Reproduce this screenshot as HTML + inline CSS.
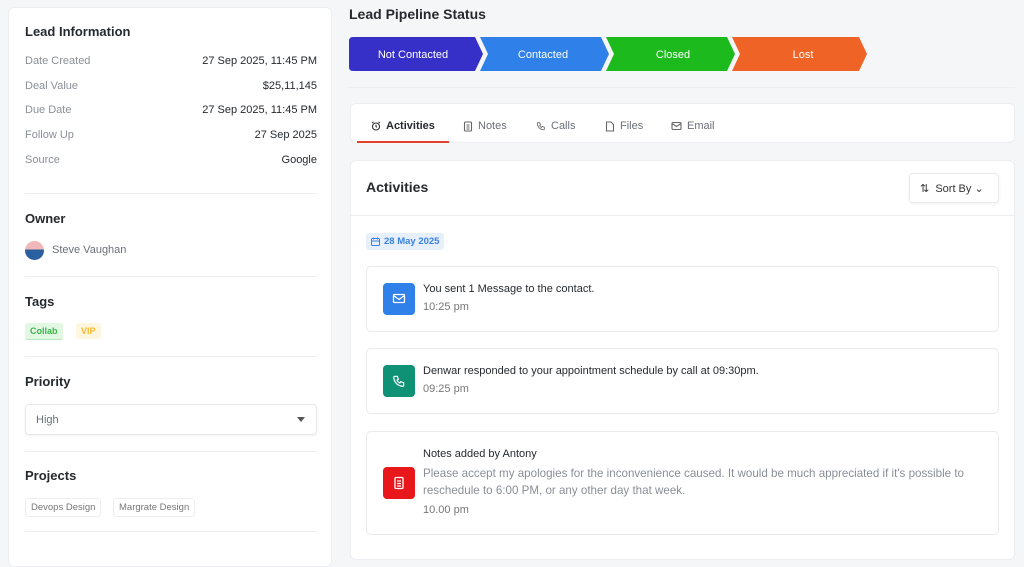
<!DOCTYPE html>
<html><head><meta charset="utf-8"><style>
*{box-sizing:border-box;margin:0;padding:0}
body{width:1024px;height:542px;overflow:hidden;background:#f5f6f8;font-family:"Liberation Sans",sans-serif;color:#222;position:relative}
.abs{position:absolute}
.left{left:8px;top:7px;width:324px;height:560px;background:#fff;border-radius:6px;border:1px solid #eceef1}
h3{font-size:13px;font-weight:700;color:#262a2e}
.row{position:absolute;left:16px;width:292px;font-size:11px;display:flex;justify-content:space-between}
.row span:first-child{color:#8a8f96}.row span:last-child{color:#262a2e}
.hr{position:absolute;left:16px;width:292px;height:1px;background:#eceef1}
.card{background:#fff;border:1px solid #eceef1;border-radius:6px}
.tab{position:absolute;top:120px;font-size:11px;color:#6b7078;display:flex;align-items:center;gap:5px}
.item{position:absolute;left:366px;width:633px;background:#fff;border:1px solid #e8eaed;border-radius:5px}
.ic{position:absolute;left:16px;width:32px;height:32px;border-radius:4px;display:flex;align-items:center;justify-content:center}
.t1{font-size:11px;color:#262a2e}.t2{font-size:11px;color:#777}
</style></head><body>
<div class="abs left">
<h3 class="abs" style="left:16px;top:16px">Lead Information</h3>
<div class="row" style="top:47px"><span>Date Created</span><span>27 Sep 2025, 11:45 PM</span></div>
<div class="row" style="top:72px"><span>Deal Value</span><span>$25,11,145</span></div>
<div class="row" style="top:96px"><span>Due Date</span><span>27 Sep 2025, 11:45 PM</span></div>
<div class="row" style="top:121px"><span>Follow Up</span><span>27 Sep 2025</span></div>
<div class="row" style="top:146px"><span>Source</span><span>Google</span></div>
<div class="hr" style="top:185px"></div>
<h3 class="abs" style="left:16px;top:203px">Owner</h3>
<div class="abs" style="left:16px;top:233px;width:19px;height:19px;border-radius:50%;background:linear-gradient(#f0b8b8 45%,#2a5fa0 45%)"></div>
<div class="abs" style="left:43px;top:236px;font-size:11px;color:#6b7078">Steve Vaughan</div>
<div class="hr" style="top:268px"></div>
<h3 class="abs" style="left:16px;top:286px">Tags</h3>
<div class="abs" style="left:16px;top:315px;padding:3px 5px;font-size:9px;font-weight:700;color:#3ab54a;background:#e2f8e3;border-radius:3px;border-bottom:1px solid #b5e6b9">Collab</div>
<div class="abs" style="left:67px;top:315px;padding:3px 5px;font-size:9px;font-weight:700;color:#f5b82e;background:#fff6e0;border-radius:3px">VIP</div>
<div class="hr" style="top:348px"></div>
<h3 class="abs" style="left:16px;top:366px">Priority</h3>
<div class="abs" style="left:16px;top:396px;width:292px;height:31px;border:1px solid #e5e7ea;border-radius:4px;box-shadow:0 1px 2px rgba(0,0,0,.05);font-size:11px;color:#6b7078;padding:9px 10px">High<span style="position:absolute;right:11px;top:12px;border:4px solid transparent;border-top:5px solid #555"></span></div>
<div class="hr" style="top:443px"></div>
<h3 class="abs" style="left:16px;top:460px">Projects</h3>
<div class="abs" style="left:16px;top:490px;padding:3px 5px;font-size:9.5px;color:#777;border:1px solid #eceef1;border-radius:3px">Devops Design</div>
<div class="abs" style="left:104px;top:490px;padding:3px 5px;font-size:9.5px;color:#777;border:1px solid #eceef1;border-radius:3px">Margrate Design</div>
<div class="hr" style="top:523px"></div>
</div>

<div class="abs" style="left:349px;top:6px;font-size:14px;font-weight:700;color:#262a2e">Lead Pipeline Status</div>
<svg class="abs" style="left:349px;top:37px" width="520" height="34">
<path d="M4 0H126L134 17L126 34H4Q0 34 0 30V4Q0 0 4 0Z" fill="#3730c8"/>
<path d="M131 0H252L260 17L252 34H131L139 17Z" fill="#2f80e8"/>
<path d="M257 0H378L386 17L378 34H257L265 17Z" fill="#1dba1d"/>
<path d="M383 0H510L518 17L510 34H383L391 17Z" fill="#ef6326"/>
<g font-family="Liberation Sans" font-size="11" fill="#fff" text-anchor="middle"><text x="64" y="21">Not Contacted</text><text x="194" y="21">Contacted</text><text x="324" y="21">Closed</text><text x="454" y="21">Lost</text></g>
</svg>
<div class="abs" style="left:349px;top:87px;width:666px;height:1px;background:#eceef1"></div>

<div class="abs card" style="left:350px;top:103px;width:665px;height:40px"></div>
<div class="tab" style="left:371px;color:#262a2e;font-weight:700"><svg width="10" height="10" viewBox="0 0 10 10" fill="none" stroke="#333" stroke-width="1.1"><circle cx="5" cy="5.5" r="3.5"/><path d="M5 3.8V5.6L6 6.3M1 2L2.5 0.8M9 2L7.5 0.8"/></svg>Activities</div>
<div class="abs" style="left:357px;top:141px;width:92px;height:2px;background:#e0442b"></div>
<div class="tab" style="left:463px"><svg width="10" height="11" viewBox="0 0 10 11" fill="none" stroke="#666" stroke-width="1.1"><rect x="1.5" y="1" width="7" height="9" rx="1"/><path d="M3.5 4h3M3.5 6h3M3.5 8h3"/></svg>Notes</div>
<div class="tab" style="left:536px"><svg width="10" height="10" viewBox="0 0 24 24" fill="none" stroke="#666" stroke-width="2"><path d="M5 4h4l2 5-2.5 1.5a11 11 0 0 0 5 5L15 13l5 2v4a2 2 0 0 1-2 2A16 16 0 0 1 3 6a2 2 0 0 1 2-2"/></svg>Calls</div>
<div class="tab" style="left:605px"><svg width="10" height="11" viewBox="0 0 10 11" fill="none" stroke="#666" stroke-width="1.1"><path d="M1.5 1H6L8.5 3.5V10H1.5Z"/></svg>Files</div>
<div class="tab" style="left:671px"><svg width="11" height="10" viewBox="0 0 11 10" fill="none" stroke="#666" stroke-width="1.1"><rect x="1" y="1.5" width="9" height="7" rx="1"/><path d="M1 2.5L5.5 5.5L10 2.5"/></svg>Email</div>

<div class="abs card" style="left:350px;top:160px;width:665px;height:400px"></div>
<div class="abs" style="left:366px;top:179px;font-size:14px;font-weight:700;color:#262a2e">Activities</div>
<div class="abs" style="left:909px;top:173px;width:90px;height:30px;background:#fff;border:1px solid #e8eaed;border-radius:4px;box-shadow:0 1px 3px rgba(0,0,0,.06);font-size:11px;color:#333;padding:8px 0 0 10px">⇅ &nbsp;Sort By ⌄</div>
<div class="abs" style="left:350px;top:215px;width:665px;height:1px;background:#eceef1"></div>
<div class="abs" style="left:366px;top:233px;padding:3px 5px;font-size:9.5px;font-weight:700;color:#3b82e0;background:#e6f0fc;border-radius:3px;display:flex;align-items:center;gap:4px"><svg width="9" height="9" viewBox="0 0 9 9" fill="none" stroke="#3b82e0" stroke-width="1"><rect x="0.5" y="1.5" width="8" height="7" rx="1"/><path d="M0.5 4h8M2.5 0.5v2M6.5 0.5v2"/></svg>28 May 2025</div>

<div class="item" style="top:266px;height:66px">
<div class="ic" style="top:16px;background:#2f80e8"><svg width="14" height="14" viewBox="0 0 14 14" fill="none" stroke="#fff" stroke-width="1.3"><rect x="1.5" y="2.5" width="11" height="8" rx="1"/><path d="M1.5 3.5L7 7.5L12.5 3.5"/></svg></div>
<div class="abs t1" style="left:56px;top:16px">You sent 1 Message to the contact.</div>
<div class="abs t2" style="left:56px;top:34px">10:25 pm</div>
</div>
<div class="item" style="top:348px;height:66px">
<div class="ic" style="top:16px;background:#0e9174"><svg width="14" height="14" viewBox="0 0 24 24" fill="none" stroke="#fff" stroke-width="2"><path d="M5 4h4l2 5-2.5 1.5a11 11 0 0 0 5 5L15 13l5 2v4a2 2 0 0 1-2 2A16 16 0 0 1 3 6a2 2 0 0 1 2-2"/></svg></div>
<div class="abs t1" style="left:56px;top:16px">Denwar responded to your appointment schedule by call at 09:30pm.</div>
<div class="abs t2" style="left:56px;top:34px">09:25 pm</div>
</div>
<div class="item" style="top:431px;height:104px">
<div class="ic" style="top:35px;background:#e8171b"><svg width="14" height="14" viewBox="0 0 14 14" fill="none" stroke="#fff" stroke-width="1.3"><rect x="3" y="1.5" width="8" height="11" rx="1"/><path d="M5 5h4M5 7.5h4M5 10h4"/></svg></div>
<div class="abs t1" style="left:56px;top:16px">Notes added by Antony</div>
<div class="abs t2" style="left:56px;top:33px;width:555px;line-height:17px;color:#8a8f96;font-size:11.6px">Please accept my apologies for the inconvenience caused. It would be much appreciated if it's possible to reschedule to 6:00 PM, or any other day that week.</div>
<div class="abs t2" style="left:56px;top:72px">10.00 pm</div>
</div>
</body></html>
